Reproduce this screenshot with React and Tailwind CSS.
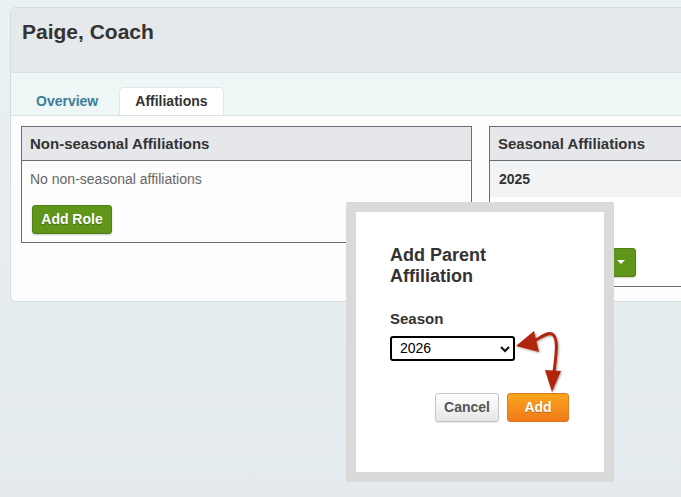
import React from "react";

const Panel = ({ title, className, children }) => (
  <div className={"shrink-0 border border-[#696d78] flex flex-col " + className}>
    <div className="h-[34px] bg-[#e6e7ea] border-b border-[#696d78] flex items-center pl-[8px] pt-px text-[15px] font-bold text-[#333]">
      {title}
    </div>
    {children}
  </div>
);

const ParentModal = () => (
  <div className="absolute left-[346px] top-[202px] w-[268px] h-[280px] bg-white border-[10px] border-[#dadada]">
    <div className="pl-[34px] pr-[35px] pt-[33px] flex flex-col">
      <h2 className="text-[18px] leading-[21px] font-bold text-[#333]">
        Add Parent
        <br />
        Affiliation
      </h2>
      <label className="mt-[23px] text-[15px] leading-[18px] font-bold text-[#333]">Season</label>
      <div className="mt-[8px] w-[125px] h-[25px] border-2 border-black rounded-[3px] flex items-center justify-between pl-[8px] pr-[2px] text-[14px] text-black">
        <span>2026</span>
        <svg width="12" height="12" viewBox="0 0 12 12">
          <path d="M2 4 L6 8 L10 4" fill="none" stroke="#111" strokeWidth="2.2" />
        </svg>
      </div>
      <div className="mt-[32px] flex justify-end gap-[8px]">
        <button className="w-[64px] h-[29px] rounded-[3px] border border-[#c4c4c4] bg-gradient-to-b from-white to-[#e6e6e6] text-[14px] font-bold text-[#555] shadow-[0_1px_1px_rgba(0,0,0,0.1)]">
          Cancel
        </button>
        <button className="w-[62px] h-[29px] rounded-[3px] border border-[#e2791a] bg-gradient-to-b from-[#faa51d] to-[#f07a1a] text-[14px] font-bold text-white [text-shadow:0_1px_1px_rgba(0,0,0,0.25)]">
          Add
        </button>
      </div>
    </div>
  </div>
);

const Arrows = () => (
  <svg className="absolute inset-0 pointer-events-none" width="681" height="497" viewBox="0 0 681 497">
    <defs>
      <filter id="sh" x="-20%" y="-20%" width="140%" height="140%">
        <feDropShadow dx="1" dy="1" stdDeviation="1" floodColor="#000" floodOpacity="0.35" />
      </filter>
    </defs>
    <g filter="url(#sh)" fill="#b0260b" stroke="#b0260b">
      <path d="M532 342 C 542 337, 547 332, 552 334 C 558 337, 557 350, 554 372" fill="none" strokeWidth="3" strokeLinecap="round" />
      <polygon points="516,346 534,331 539,352" stroke="none" />
      <polygon points="545,370 561,371 552,392" stroke="none" />
    </g>
  </svg>
);

export default function App() {
  return (
    <div className="relative w-[681px] h-[497px] overflow-hidden bg-gradient-to-b from-[#e9f1f2] to-[#e4eaed] font-['Liberation_Sans',Arial,sans-serif]">
      <div className="pt-[7px] pl-[10px]">
        <div className="w-[700px] border border-[#d3dcdf] rounded-l-[6px] overflow-hidden bg-[#fdfdfd]">
          <div className="h-[65px] bg-[#e5e9ec] border-b border-[#d8e0e3] pl-[11px] pt-[12px]">
            <h1 className="text-[21px] leading-[24px] font-bold text-[#333]">Paige, Coach</h1>
          </div>
          <div className="h-[43px] bg-[#eef6f6] border-b border-[#dbe2e4] flex items-end pl-[10px] gap-[6px]">
            <div className="h-[28px] px-[15px] flex items-center text-[14px] font-bold text-[#3d7c9c]">Overview</div>
            <div className="h-[28px] px-[15px] flex items-center text-[14px] font-bold text-[#333] bg-white border border-b-0 border-[#dfe6e8] rounded-t-[5px]">
              Affiliations
            </div>
          </div>
          <div className="h-[185px] px-[10px] pt-[10px] flex items-start gap-[17px]">
            <Panel title="Non-seasonal Affiliations" className="w-[451px]">
              <div className="pl-[8px] pt-[8px] pb-[8px]">
                <p className="text-[14px] leading-[20px] text-[#666]">No non-seasonal affiliations</p>
                <button className="mt-[16px] ml-[2px] w-[80px] h-[29px] rounded-[3px] bg-[#5f961a] border border-[#527f14] text-[14px] font-bold text-white [text-shadow:0_1px_1px_rgba(0,0,0,0.3)] shadow-[0_1px_2px_rgba(0,0,0,0.2)]">
                  Add Role
                </button>
              </div>
            </Panel>
            <Panel title="Seasonal Affiliations" className="w-[230px] border-r-0">
              <div className="h-[36px] bg-[#f2f3f5] flex items-center pl-[9px] text-[14px] font-bold text-[#333]">2025</div>
              <div className="h-[89px] bg-white pt-[51px] pl-[50px]">
                <button className="w-[96px] h-[29px] rounded-[3px] bg-[#5f961a] border border-[#527f14] flex items-center justify-end pr-[10px] gap-[8px] text-[14px] font-bold text-white shadow-[0_1px_2px_rgba(0,0,0,0.2)]">
                  <span>Add</span>
                  <svg width="8" height="5" viewBox="0 0 8 5">
                    <path d="M0 0 L8 0 L4 4 Z" fill="#fff" />
                  </svg>
                </button>
              </div>
            </Panel>
          </div>
        </div>
      </div>
      <ParentModal />
      <Arrows />
    </div>
  );
}
